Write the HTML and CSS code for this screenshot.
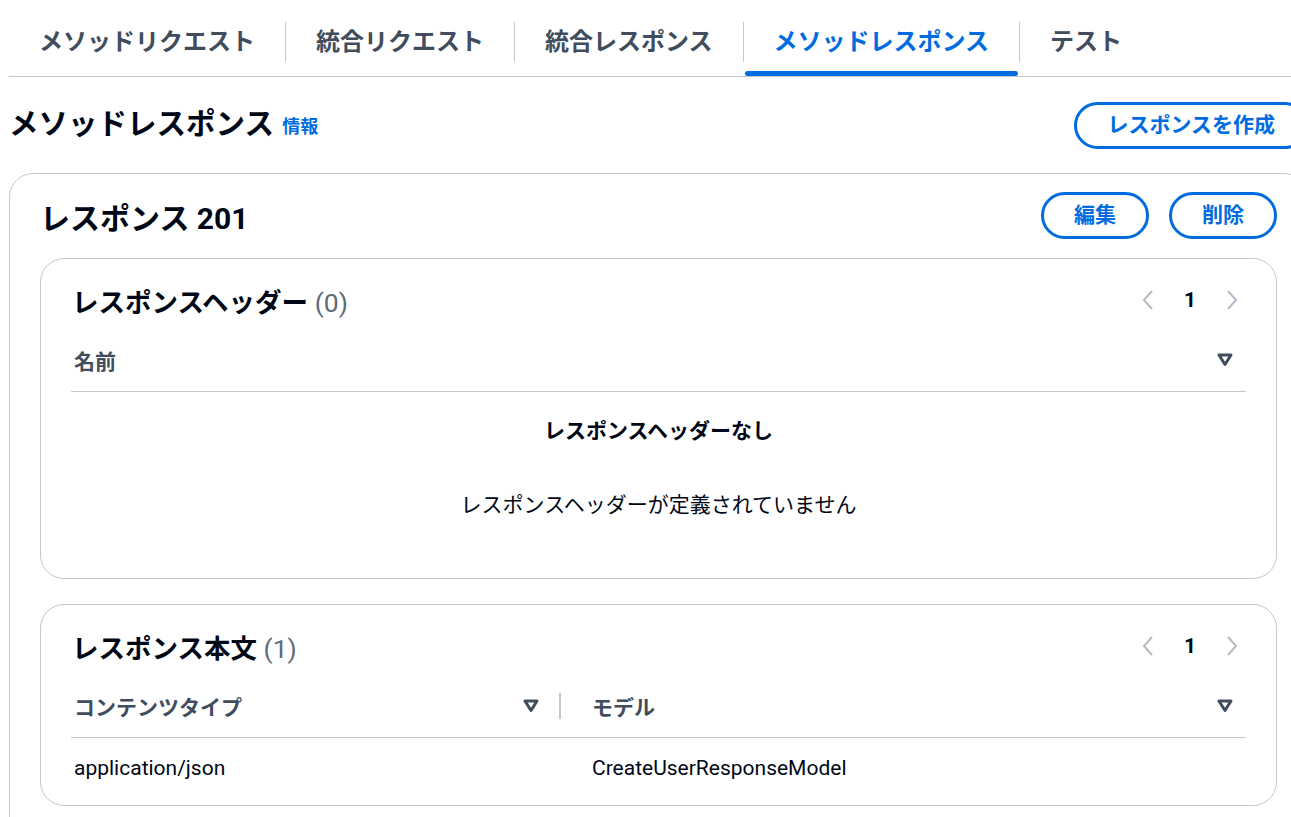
FILE: index.html
```html
<!DOCTYPE html>
<html>
<head>
	<meta charset="utf-8">
	<title>メソッドレスポンス</title>
	<link rel="stylesheet" href="styles.css">
</head>
<body>
	<div class="page">
		<div class="tabs">
			<div class="tab"><span class="tab-label">メソッドリクエスト</span></div>
			<div class="tab"><span class="tab-label">統合リクエスト</span></div>
			<div class="tab"><span class="tab-label">統合レスポンス</span></div>
			<div class="tab active"><span class="tab-label">メソッドレスポンス</span></div>
			<div class="tab"><span class="tab-label">テスト</span></div>
		</div>

		<div class="page-head">
			<h1>メソッドレスポンス <a href="#" class="info">情報</a></h1>
			<a href="#" class="button">レスポンスを作成</a>
		</div>

		<div class="card">
			<div class="card-head">
				<h2>レスポンス 201</h2>
				<div class="actions">
					<a href="#" class="button small">編集</a>
					<a href="#" class="button small">削除</a>
				</div>
			</div>

			<div class="panel">
				<div class="panel-head">
					<h3>レスポンスヘッダー <span class="count">(0)</span></h3>
					<div class="pager">
						<span class="pager-btn"><svg width="14" height="22" viewBox="0 0 14 22"><polyline points="11,2 3,11 11,20"/></svg></span>
						<span class="pager-btn page-num">1</span>
						<span class="pager-btn"><svg width="14" height="22" viewBox="0 0 14 22"><polyline points="3,2 11,11 3,20"/></svg></span>
					</div>
				</div>
				<div class="table-head single">
					<div class="th first">名前 <svg class="sort" width="16" height="14" viewBox="0 0 16 14"><polygon points="2,2 14,2 8,11.5"/></svg></div>
				</div>
				<div class="empty">
					<p class="empty-title">レスポンスヘッダーなし</p>
					<p>レスポンスヘッダーが定義されていません</p>
				</div>
			</div>

			<div class="panel">
				<div class="panel-head">
					<h3>レスポンス本文 <span class="count">(1)</span></h3>
					<div class="pager">
						<span class="pager-btn"><svg width="14" height="22" viewBox="0 0 14 22"><polyline points="11,2 3,11 11,20"/></svg></span>
						<span class="pager-btn page-num">1</span>
						<span class="pager-btn"><svg width="14" height="22" viewBox="0 0 14 22"><polyline points="3,2 11,11 3,20"/></svg></span>
					</div>
				</div>
				<div class="table-head">
					<div class="th first">コンテンツタイプ <svg class="sort" width="16" height="14" viewBox="0 0 16 14"><polygon points="2,2 14,2 8,11.5"/></svg></div>
					<div class="col-sep"></div>
					<div class="th">モデル <svg class="sort" width="16" height="14" viewBox="0 0 16 14"><polygon points="2,2 14,2 8,11.5"/></svg></div>
				</div>
				<div class="table-row">
					<div class="td first">application/json</div>
					<div class="td">CreateUserResponseModel</div>
				</div>
			</div>
		</div>
	</div>
</body>
</html>
```

FILE: styles.css
```css
html{background: #fff;}
body{margin: 0; width: 1291px; height: 817px; overflow: hidden; font-family: Roboto, "Noto Sans CJK JP", sans-serif; color: #000716;}
a{text-decoration: none;}
h1, h2, h3, p{margin: 0;}

.page{width: 1299px; margin-left: 9px;}

.tabs{display: flex; height: 76px; border-bottom: 1px solid #c6c6cd; margin-right: -40px;}
.tab{position: relative; padding: 22px 0 14px;}
.tab-label{display: block; padding: 0 30px; line-height: 40px; font-size: 24px; font-weight: bold; color: #414d5c; border-left: 1px solid #c6c6cd;}
.tab:first-child .tab-label{border-left: none;}
.tab.active .tab-label{color: #006ce0;}
.tab.active::after{content: ""; position: absolute; left: 2px; right: 1px; bottom: 0; height: 5px; border-radius: 3px; background: #006ce0;}

.page-head{display: flex; justify-content: space-between; align-items: center; padding-top: 25px; height: 47px;}
h1{font-size: 29.5px; font-weight: bold; line-height: 40px;}
.info{font-size: 18px; color: #006ce0; margin-left: 1px; vertical-align: 1px;}

.button{display: inline-block; box-sizing: border-box; height: 47px; line-height: 41px; padding: 0 30px; border: 3px solid #006ce0; border-radius: 24px; font-size: 21px; font-weight: bold; color: #006ce0; background: #fff;}
.button.small{padding: 0 30px;}

.card{margin-top: 24px; border: 1px solid #c6c6cd; border-radius: 24px; padding: 18px 30px 30px;}
.card-head{display: flex; justify-content: space-between; align-items: center; height: 47px; margin-bottom: 19px;}
h2{font-size: 30px; font-weight: bold;}
.actions{display: flex; gap: 20px;}

.panel{border: 1px solid #c6c6cd; border-radius: 24px; padding: 24px 30px 0; margin-bottom: 25px;}
.panel-head{display: flex; justify-content: space-between; align-items: center; height: 34px;}
h3{font-size: 26.5px; font-weight: bold; margin-left: 1px;}
.count{font-weight: normal; color: #5f6b7a;}
.pager{display: flex; gap: 14px; align-items: center;}
.pager-btn{width: 28px; display: flex; justify-content: center; align-items: center;}
.pager-btn polyline{fill: none; stroke: #b4bbc5; stroke-width: 2;}
.page-num{font-size: 21px; font-weight: bold; color: #000716;}

.table-head{display: grid; grid-template-columns: 488px 2px 1fr; align-items: center; height: 52px; padding-bottom: 5px; margin-top: 17px; border-bottom: 1px solid #c6c6cd;}
.table-head.single{grid-template-columns: 1fr;}
.th{display: flex; justify-content: space-between; align-items: center; padding: 0 13px 0 31px; font-size: 21px; font-weight: bold; color: #414d5c;}
.th.first{padding: 0 20px 0 3px;}
.table-head.single .th.first{padding-right: 13px;}
.sort polygon{fill: none; stroke: #414d5c; stroke-width: 3; stroke-linejoin: round;}
.col-sep{height: 26px; background: #c6c6cd;}

.empty{text-align: center; padding: 25px 0 59px; font-size: 21px; line-height: 28px;}
.empty-title{font-weight: bold; margin-bottom: 46px;}

.table-row{display: grid; grid-template-columns: 490px 1fr; padding: 16px 0 23px; font-size: 21px; line-height: 28px;}
.td.first{padding-left: 3px;}
.td{padding-left: 31px;}
```
